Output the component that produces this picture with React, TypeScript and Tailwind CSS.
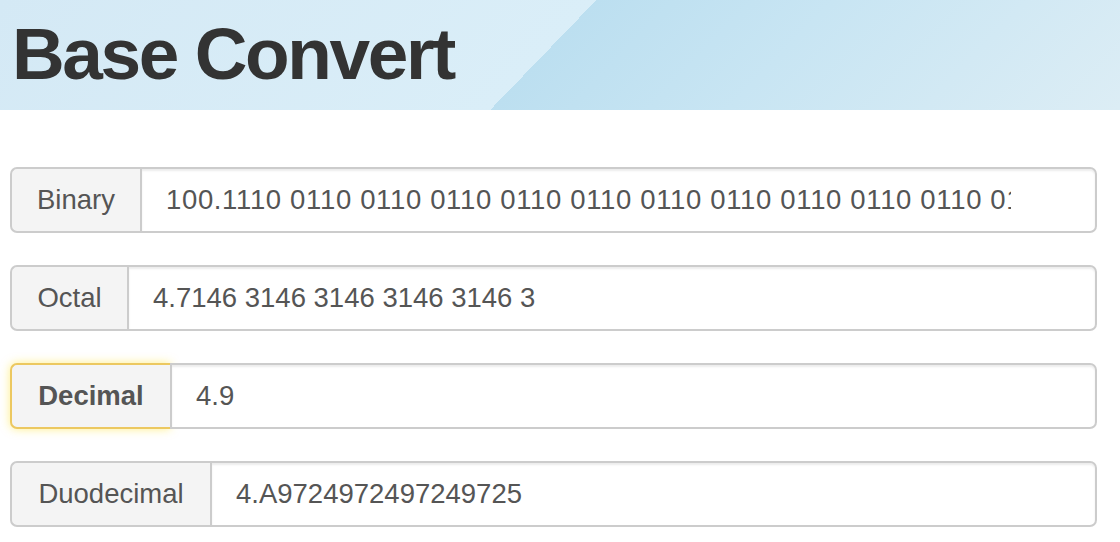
import React from 'react';

const font = { fontFamily: '"Liberation Sans", Arial, Helvetica, sans-serif' };

type Row = { label: string; value: string; width: string; active?: boolean; wide?: boolean };

const binary =
  '100.1110 0110 0110 0110 0110 0110 0110 0110 0110 0110 0110 0110 0110 0110 0110 0110 0110 0110 0110 0110 0110 0110 0110 0110';

const rows: Row[] = [
  { label: 'Binary', value: binary, width: 'w-[130px]', wide: true },
  { label: 'Octal', value: '4.7146 3146 3146 3146 3146 3', width: 'w-[117px]' },
  { label: 'Decimal', value: '4.9', width: 'w-[160px]', active: true },
  { label: 'Duodecimal', value: '4.A9724972497249725', width: 'w-[200px]' },
];

const Field: React.FC<{ row: Row }> = ({ row }) => {
  const labelTone = row.active
    ? 'border-[#ecc860] font-bold shadow-[0_0_10px_rgba(255,225,40,0.55)]'
    : 'border-[#cccccc] font-normal';
  return (
    <div className="flex h-[66px]">
      <div
        className={`${row.width} shrink-0 flex items-center justify-center rounded-l-[7px] border-2 border-r-0 bg-[#f4f4f4] text-[27.5px] text-[#555555] ${labelTone}`}
      >
        {row.label}
      </div>
      <input
        readOnly
        value={row.value}
        style={font}
        className={`flex-1 min-w-0 rounded-r-[7px] border-2 border-[#cccccc] bg-white pl-[24px] pr-[84px] text-[27.5px] text-[#555555] outline-none shadow-[inset_0_2px_2px_rgba(0,0,0,0.075)] ${
          row.wide ? 'tracking-[0.65px]' : ''
        }`}
      />
    </div>
  );
};

export default function App() {
  return (
    <div className="w-[1120px] h-[542px] overflow-hidden bg-white" style={font}>
      <header className="h-[110px] pt-[17px] pl-[12px] bg-[linear-gradient(134deg,#d4e9f5_0px,#daeef8_429px,#bcdff0_429px,#c8e5f3_600px,#dcedf5_880px)]">
        <h1 className="text-[73px] leading-none font-bold tracking-[-2.4px] text-[#333333]">Base Convert</h1>
      </header>
      <main className="mt-[57px] pl-[10px] pr-[23px] flex flex-col gap-[32px]">
        {rows.map((r) => (
          <Field key={r.label} row={r} />
        ))}
      </main>
    </div>
  );
}
